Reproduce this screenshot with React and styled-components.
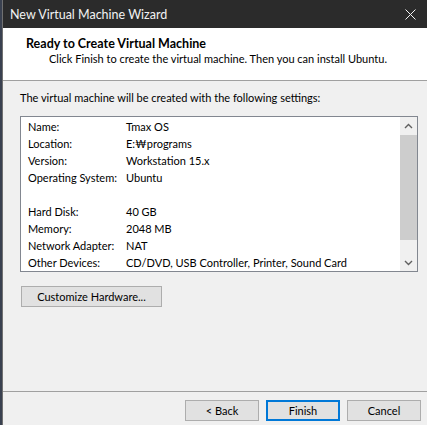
import React from "react";
import styled, { createGlobalStyle } from "styled-components";

const GlobalStyle = createGlobalStyle`
  html, body {
    margin: 0;
    padding: 0;
    background: #3a4150;
  }
  body {
    font-family: "Segoe UI", Lato, "Liberation Sans", sans-serif;
    font-size: 11px;
    color: #000;
  }
`;

const Window = styled.div`
  margin-left: 2px;
  width: 425px;
  height: 425px;
  display: flex;
  flex-direction: column;
  background: #f0f0f0;
  border-left: 1px solid #707070;
  box-sizing: border-box;
  overflow: hidden;
`;

const TitleBar = styled.div`
  height: 28px;
  flex-shrink: 0;
  display: flex;
  align-items: center;
  justify-content: space-between;
  background: #2b2b2b;
  color: #f2f2f2;
  padding: 0 8px 0 7px;
  font-size: 12.5px;
`;

const CloseButton = styled.div`
  width: 18px;
  height: 18px;
  display: flex;
  align-items: center;
  justify-content: center;
`;

const Header = styled.div`
  height: 53px;
  flex-shrink: 0;
  background: #fff;
  border-bottom: 1px solid #a0a0a0;
  padding: 8px 0 0 23px;
  box-sizing: border-box;
  font-size: 11px;
`;

const HeaderTitle = styled.div`
  font-weight: bold;
  font-size: 12.5px;
  line-height: 15px;
`;

const HeaderText = styled.div`
  padding-left: 23px;
  line-height: 16px;
`;

const Body = styled.div`
  flex: 1;
  padding: 8px 9px 0 17px;
  display: flex;
  flex-direction: column;
`;

const Intro = styled.div`
  line-height: 17px;
  margin-bottom: 10px;
`;

const ListBox = styled.div`
  height: 156px;
  display: flex;
  background: #fff;
  border: 1px solid #828790;
  box-sizing: border-box;
`;

const Rows = styled.div`
  flex: 1;
  padding: 1px 0 0 7px;
  overflow: hidden;
`;

const Row = styled.div`
  display: grid;
  grid-template-columns: 98px 1fr;
  height: 17px;
  line-height: 17px;
  white-space: nowrap;
`;

const ScrollBar = styled.div`
  width: 17px;
  display: flex;
  flex-direction: column;
  background: #f0f0f0;
`;

const ScrollArrow = styled.div`
  height: 17px;
  display: flex;
  align-items: center;
  justify-content: center;
`;

const Track = styled.div`
  flex: 1;
  padding: 1px 0;
  display: flex;
  flex-direction: column;
`;

const Thumb = styled.div`
  height: 105px;
  background: #cdcdcd;
`;

const Button = styled.button`
  font: inherit;
  color: #000;
  height: 21px;
  width: ${(p) => p.$w || 74}px;
  background: #e1e1e1;
  border: 1px solid ${(p) => (p.$default ? "#0078d7" : "#adadad")};
  box-shadow: ${(p) => (p.$default ? "inset 0 0 0 1px #0078d7" : "none")};
  padding: 0;
  margin: 0;
`;

const CustomizeRow = styled.div`
  padding: 14px 0 0 1px;
`;

const Footer = styled.div`
  flex-shrink: 0;
  border-top: 1px solid #a0a0a0;
  display: flex;
  justify-content: flex-end;
  gap: 7px;
  padding: 8px 6px 0 0;
  box-sizing: border-box;
  height: 34px;
`;

const Spacer = styled.div`
  height: ${(p) => p.$h}px;
`;

const settings = [
  ["Name:", "Tmax OS"],
  ["Location:", "E:\u20A9programs"],
  ["Version:", "Workstation 15.x"],
  ["Operating System:", "Ubuntu"],
  null,
  ["Hard Disk:", "40 GB"],
  ["Memory:", "2048 MB"],
  ["Network Adapter:", "NAT"],
  ["Other Devices:", "CD/DVD, USB Controller, Printer, Sound Card"],
];

function Chevron({ up }) {
  return (
    <svg width="9" height="6" viewBox="0 0 9 6">
      <path
        d={up ? "M1 5 L4.5 1.5 L8 5" : "M1 1 L4.5 4.5 L8 1"}
        fill="none"
        stroke="#606060"
        strokeWidth="1.4"
      />
    </svg>
  );
}

export default function App() {
  return (
    <>
      <GlobalStyle />
      <Window>
        <TitleBar>
          <span>New Virtual Machine Wizard</span>
          <CloseButton>
            <svg width="11" height="11" viewBox="0 0 11 11">
              <path d="M0.5 0.5 L10.5 10.5 M10.5 0.5 L0.5 10.5" stroke="#f2f2f2" strokeWidth="1" />
            </svg>
          </CloseButton>
        </TitleBar>
        <Header>
          <HeaderTitle>Ready to Create Virtual Machine</HeaderTitle>
          <HeaderText>
            Click Finish to create the virtual machine. Then you can install Ubuntu.
          </HeaderText>
        </Header>
        <Body>
          <Intro>The virtual machine will be created with the following settings:</Intro>
          <ListBox>
            <Rows>
              {settings.map((s, i) =>
                s ? (
                  <Row key={i}>
                    <span>{s[0]}</span>
                    <span>{s[1]}</span>
                  </Row>
                ) : (
                  <Spacer key={i} $h={17} />
                )
              )}
            </Rows>
            <ScrollBar>
              <ScrollArrow>
                <Chevron up />
              </ScrollArrow>
              <Track>
                <Thumb />
              </Track>
              <ScrollArrow>
                <Chevron />
              </ScrollArrow>
            </ScrollBar>
          </ListBox>
          <CustomizeRow>
            <Button $w={141}>Customize Hardware...</Button>
          </CustomizeRow>
        </Body>
        <Footer>
          <Button>&lt; Back</Button>
          <Button $default>Finish</Button>
          <Button>Cancel</Button>
        </Footer>
      </Window>
    </>
  );
}
